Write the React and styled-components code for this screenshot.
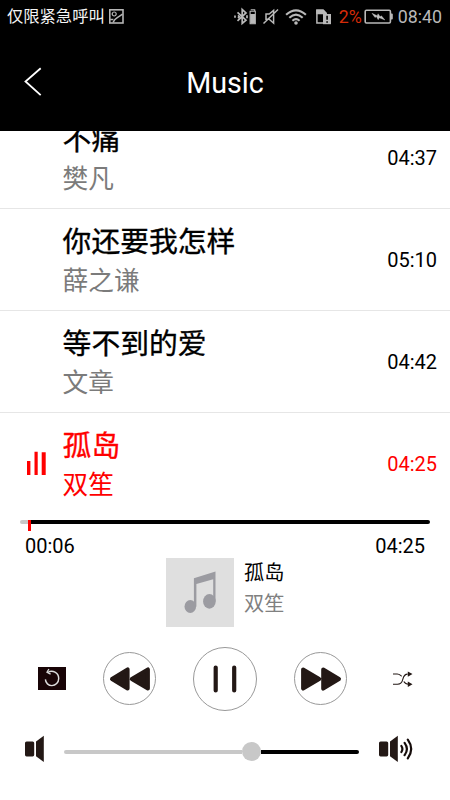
import React from 'react';
import styled, { createGlobalStyle } from 'styled-components';

const GlobalStyle = createGlobalStyle`
  * { box-sizing: border-box; }
  html, body { margin: 0; padding: 0; background: #fff; }
  body { font-family: Roboto, 'Noto Sans CJK SC', sans-serif; color: #000; }
  svg { display: block; flex: none; }
`;

const Screen = styled.main`
  width: 450px;
  height: 800px;
  overflow: hidden;
  background: #fff;
  display: flex;
  flex-direction: column;
`;

const StatusBar = styled.div`
  height: 33px;
  flex: none;
  padding: 0 8px 0 7px;
  background: #000;
  display: flex;
  align-items: center;
  justify-content: space-between;
`;

const StatusGroup = styled.div`
  display: flex;
  align-items: center;
  color: #b9b9b9;
`;

const Carrier = styled.span`
  font-size: 16.3px;
  line-height: 24px;
  color: #f4f4f4;
  margin: 0 4px 0 0;
  white-space: nowrap;
`;

const StatusText = styled.span`
  font-size: 17.8px;
  line-height: 24px;
  color: ${(p) => (p.$alert ? '#d52b08' : '#b9b9b9')};
`;

const BatteryLevel = styled.div`
  display: flex;
  align-items: center;
  gap: 2px;
  margin: 0 4px 0 5px;
`;

const Header = styled.header`
  height: 98px;
  flex: none;
  background: #000;
  color: #fff;
  display: grid;
  grid-template-columns: 66px 1fr 66px;
  align-items: center;
`;

const BackButton = styled.button`
  border: 0;
  background: none;
  color: inherit;
  padding: 0 0 0 24px;
`;

const Title = styled.h1`
  margin: 2px 0 0;
  font-size: 28.7px;
  font-weight: 400;
  line-height: 36px;
  text-align: center;
`;

const SongList = styled.section`
  height: 383px;
  flex: none;
  overflow: hidden;
  display: flex;
  flex-direction: column;
  justify-content: flex-end;
`;

const SongRow = styled.article`
  height: 102px;
  flex: none;
  padding: 13px 13px 0 0;
  display: grid;
  grid-template-columns: 62.6px 1fr auto;
  color: ${(p) => (p.$active ? '#ff0000' : '#000')};
  border-top: 1px solid #e6e6e6;
`;

const Playing = styled.div`
  padding: 25px 0 0 26px;
`;

const SongTitle = styled.div`
  font-size: 28.8px;
  font-weight: 400;
  line-height: 40px;
  height: 40px;
  -webkit-text-stroke: 0.35px currentColor;
`;

const Artist = styled.div`
  font-size: 25.7px;
  line-height: 38px;
  color: ${(p) => (p.$active ? '#ff0000' : '#7b7b7b')};
`;

const Duration = styled.span`
  font-size: 20px;
  line-height: 24px;
  margin-top: 26px;
`;

const Progress = styled.div`
  height: 18px;
  flex: none;
  padding: 6px 20px 0;
  display: flex;
  align-items: flex-start;
`;

const Elapsed = styled.div`
  width: 8px;
  height: 4px;
  border-radius: 2px 0 0 2px;
  background: #c8c8c8;
`;

const Playhead = styled.div`
  width: 3px;
  height: 11px;
  background: #f00;
`;

const Remaining = styled.div`
  flex: 1;
  height: 4px;
  border-radius: 0 2px 2px 0;
  background: #000;
`;

const Times = styled.div`
  height: 26px;
  flex: none;
  padding: 2px 25px 0;
  display: flex;
  justify-content: space-between;
  font-size: 20px;
  line-height: 24px;
`;

const NowPlaying = styled.section`
  height: 69px;
  flex: none;
  padding-left: 166px;
  display: flex;
  gap: 10px;
`;

const Cover = styled.div`
  width: 68px;
  height: 69px;
  background: #dfdfdf;
`;

const TrackName = styled.div`
  font-size: 20.2px;
  line-height: 30px;
`;

const TrackArtist = styled.div`
  font-size: 20.2px;
  line-height: 30px;
  margin-top: 1px;
  color: #808080;
`;

const Controls = styled.section`
  height: 103px;
  flex: none;
  display: grid;
  grid-template-columns: 103px 90px 101px 99px 57px;
  align-items: center;
`;

const IconButton = styled.button`
  border: 0;
  padding: 0;
  background: none;
  justify-self: start;
  margin-left: ${(p) => p.$inset || 0}px;
`;

const RoundButton = styled.button`
  width: ${(p) => p.$size}px;
  height: ${(p) => p.$size}px;
  padding: 0;
  border: 1px solid #999;
  border-radius: 50%;
  background: #fff;
  display: flex;
  align-items: center;
  justify-content: center;
`;

const VolumeBar = styled.section`
  height: 38px;
  flex: none;
  padding: 0 37px 0 25px;
  display: flex;
  align-items: center;
`;

const VolumeTrack = styled.div`
  width: 295px;
  height: 20px;
  margin: 5px 20px 0;
  display: flex;
  align-items: center;
`;

const VolumeFill = styled.div`
  width: 178px;
  height: 4px;
  border-radius: 2px 0 0 2px;
  background: #c8c8c8;
`;

const Thumb = styled.div`
  width: 19px;
  height: 19px;
  border-radius: 50%;
  background: #c8c8c8;
`;

const VolumeRest = styled.div`
  flex: 1;
  height: 4px;
  border-radius: 0 2px 2px 0;
  background: #000;
`;

const PictureIcon = () => (
  <svg width="15" height="15" viewBox="0 0 15 15" fill="none" stroke="#b5b5b5">
    <rect x=".8" y=".8" width="13.2" height="13.2" strokeWidth="1.6" />
    <circle cx="5.2" cy="5" r="2" strokeWidth="1.2" />
    <path d="M4 13.5C5 9.5 8 9.5 13.5 5.2M1.2 10.6h3.2" strokeWidth="1.5" />
  </svg>
);

const StatusIcons = () => (
  <svg width="100" height="20" viewBox="233 6 100 20" fill="none" stroke="#b9b9b9" strokeWidth="1.7">
    <path d="m236.5 11.3 8.5 7.9-3.8 3.3V8.5l3.8 3.4-8.5 7.9" />
    <path d="M234 14.5v2.2M237 14.4l1.5 1.3-1.5 1.3M246 14.2v3" />
    <path d="M249.7 8.7h4v1.5M249.1 10.2h5.2v12.6h-5.2z" strokeWidth="1.1" />
    <path d="M249.2 13h5v9.6h-5z" fill="#b9b9b9" stroke="none" />
    <path d="M265 13h3.2l4.4-3.6v12.8l-4.4-3.9H265zM262.5 22.5l14.5-14" strokeWidth="1.5" />
    <path d="M285.1 13.8q9.9-9 19.8 0M288.3 16.8q6.7-6.4 13.4 0M291.4 19.7q3.6-3.3 7.2 0" strokeWidth="2.1" />
    <circle cx="295" cy="22" r="1.8" fill="#b9b9b9" stroke="none" />
    <path d="M323 22.1h-7.1V9.2h6.2l3 3.2v1" strokeWidth="1.5" />
    <path d="M315.2 8.5h7.3l3.3 3.5v1.2h-10.6z" fill="#b9b9b9" stroke="none" />
    <path d="M322 13h8v10.2h-8z" fill="#b9b9b9" stroke="none" />
    <path d="M326.1 14.8v4M326.1 20.2v1.5" stroke="#000" strokeWidth="1.6" />
  </svg>
);

const BatteryIcon = () => (
  <svg width="30" height="16" viewBox="0 0 30 16" fill="none">
    <rect x="1.2" y="1.2" width="25.2" height="12.8" rx="1.2" stroke="#b9b9b9" strokeWidth="1.6" />
    <path d="M26.4 4.6h1.4q1 0 1 1v4q0 1-1 1h-1.4z" fill="#b9b9b9" />
    <path d="m8 4.3 5.1 2.4 1-1.9 2 3 1.3-1 3.5 4.2-5.6-2.3-1.1 2-1.8-3.1-1.4.9z" fill="#c2c2c2" stroke="#c2c2c2" strokeWidth=".4" />
  </svg>
);

const EqualizerIcon = () => (
  <svg width="20" height="25" viewBox="0 0 20 25" fill="#f00">
    <path d="M1 10h3.4v14H1zM8.5.7h3.2V24H8.5zM15.7 1.2h4V24h-4z" />
  </svg>
);

const NoteIcon = () => (
  <svg width="68" height="69" viewBox="0 0 68 69" fill="#9b9ba1">
    <path d="m27.9 20.3 21.6-6.7v29.8h-2.3V21.3L30.4 26v22.5h-2.5z" />
    <ellipse cx="24.3" cy="48.5" rx="5.8" ry="6.5" />
    <ellipse cx="43.4" cy="43.4" rx="6.3" ry="7.3" />
  </svg>
);

const RepeatIcon = () => (
  <svg width="28" height="23" viewBox="0 0 28 23">
    <path d="M0 0h28v23H0z" fill="#180406" />
    <path d="M9.7 5.5c4.7-3.2 11 .1 11 6 0 4.1-3.1 7.1-6.8 7.1-3.5 0-6.3-2.6-6.5-6.2" fill="none" stroke="#ddd" strokeWidth="1.45" />
    <path d="M10.9 2 9 5.3 12.6 7.1" fill="none" stroke="#ddd" strokeWidth="1.3" />
  </svg>
);

const RewindIcon = () => (
  <svg width="42" height="26" viewBox="0 0 42 26" fill="#231815" stroke="#231815" strokeWidth="4" strokeLinejoin="round">
    <path d="M3 13 18.6 3.4v19.2zM22.8 13l16.1-9.6v19.2z" />
  </svg>
);

const ForwardIcon = () => (
  <svg width="42" height="26" viewBox="0 0 42 26" fill="#231815" stroke="#231815" strokeWidth="4" strokeLinejoin="round">
    <path d="M3.1 3.4 19.2 13 3.1 22.6zM23.2 3.4 39 13l-15.8 9.6z" />
  </svg>
);

const PauseIcon = () => (
  <svg width="24" height="28" viewBox="0 0 24 28" stroke="#231815" strokeWidth="4.2" strokeLinecap="round">
    <path d="M2.7 2.5v23M21.2 2.5v23" />
  </svg>
);

const ShuffleIcon = () => (
  <svg width="20" height="16" viewBox="0 0 20 16" fill="none" stroke="#231815" strokeWidth="1.1">
    <path d="M0 3h4.2C6.8 3 7.3 4.4 8.7 5.2M0 13.3h4.5C12.3 13.3 7.5 3.1 14.6 3.1M10.8 10.5c1 1.7 2.3 2.7 4.7 2.7" />
    <path d="m14.8.4 4.7 2.7-4.7 2.7zM14.8 10.5l4.7 2.7-4.7 2.7z" fill="#231815" stroke="none" />
  </svg>
);

const SpeakerIcon = ({ loud }) => (
  <svg width={loud ? 34 : 19} height="28" viewBox={loud ? '0 0 34 28' : '0 0 19 28'} fill="#231815">
    <rect x="0" y="6.4" width="9.2" height="15" rx="1.6" />
    <path d="m11 6.5 7.8-5.7V27L11 21.3z" />
    {loud && (
      <path
        d="M22.4 11q2 3 0 6M25.6 7.8q4.6 6.2 0 12.4M28.8 4.7q6.8 9.3 0 18.6"
        fill="none"
        stroke="#160d0b"
        strokeWidth="2.2"
        strokeLinecap="round"
      />
    )}
  </svg>
);

const songs = [
  { title: '不痛', artist: '樊凡', duration: '04:37' },
  { title: '你还要我怎样', artist: '薛之谦', duration: '05:10' },
  { title: '等不到的爱', artist: '文章', duration: '04:42' },
  { title: '孤岛', artist: '双笙', duration: '04:25', active: true },
];

export default function App() {
  return (
    <>
      <GlobalStyle />
      <Screen>
        <StatusBar>
          <StatusGroup>
            <Carrier>仅限紧急呼叫</Carrier>
            <PictureIcon />
          </StatusGroup>
          <StatusGroup>
            <StatusIcons />
            <BatteryLevel>
              <StatusText $alert>2%</StatusText>
              <BatteryIcon />
            </BatteryLevel>
            <StatusText>08:40</StatusText>
          </StatusGroup>
        </StatusBar>
        <Header>
          <BackButton aria-label="Back">
            <svg width="18" height="30" viewBox="0 0 18 30" fill="none" stroke="#fff" strokeWidth="1.8">
              <path d="M16.7 1.2 1.5 14.5l15.2 13.7" />
            </svg>
          </BackButton>
          <Title>Music</Title>
        </Header>
        <SongList>
          {songs.map((song) => (
            <SongRow key={song.title} $active={song.active}>
              <Playing>{song.active && <EqualizerIcon />}</Playing>
              <div>
                <SongTitle>{song.title}</SongTitle>
                <Artist $active={song.active}>{song.artist}</Artist>
              </div>
              <Duration>{song.duration}</Duration>
            </SongRow>
          ))}
        </SongList>
        <Progress>
          <Elapsed />
          <Playhead />
          <Remaining />
        </Progress>
        <Times>
          <span>00:06</span>
          <span>04:25</span>
        </Times>
        <NowPlaying>
          <Cover><NoteIcon /></Cover>
          <div>
            <TrackName>孤岛</TrackName>
            <TrackArtist>双笙</TrackArtist>
          </div>
        </NowPlaying>
        <Controls>
          <IconButton aria-label="Repeat" $inset={38}><RepeatIcon /></IconButton>
          <RoundButton aria-label="Previous" $size={53}><RewindIcon /></RoundButton>
          <RoundButton aria-label="Pause" $size={64}><PauseIcon /></RoundButton>
          <RoundButton aria-label="Next" $size={53}><ForwardIcon /></RoundButton>
          <IconButton aria-label="Shuffle"><ShuffleIcon /></IconButton>
        </Controls>
        <VolumeBar>
          <SpeakerIcon />
          <VolumeTrack>
            <VolumeFill />
            <Thumb />
            <VolumeRest />
          </VolumeTrack>
          <SpeakerIcon loud />
        </VolumeBar>
      </Screen>
    </>
  );
}
